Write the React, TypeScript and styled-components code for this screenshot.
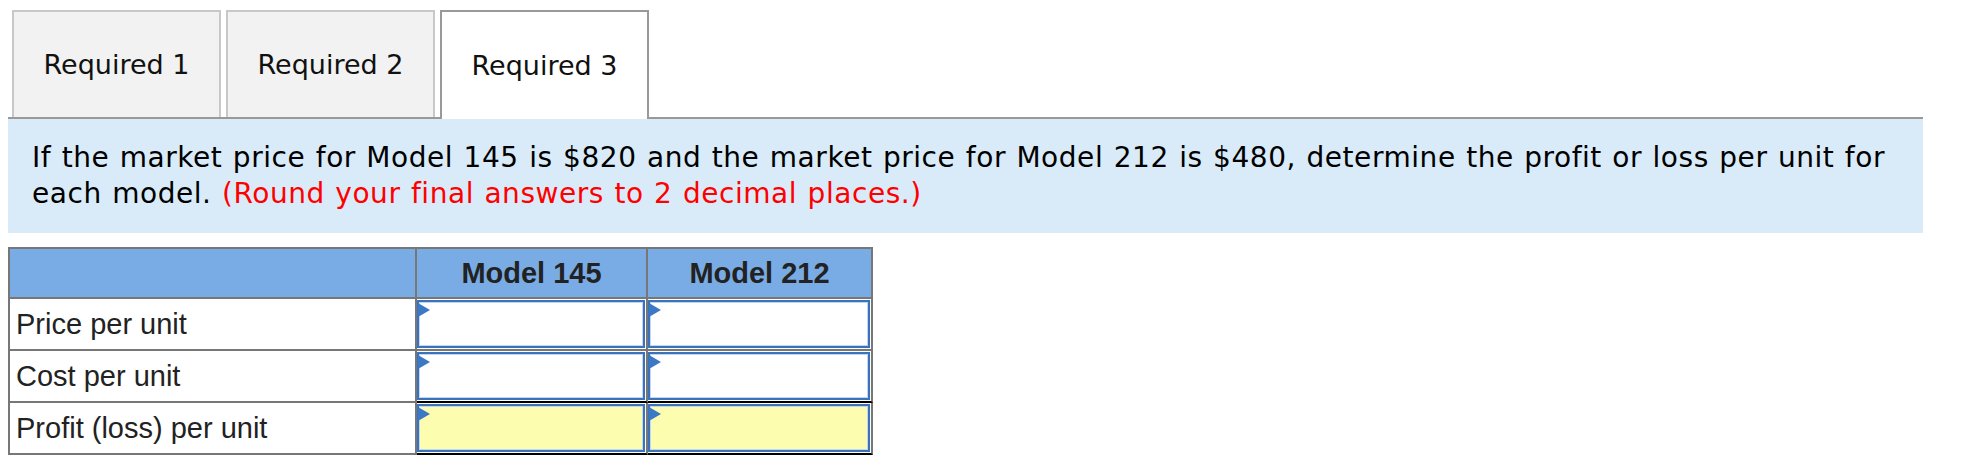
import styled, { createGlobalStyle, css } from 'styled-components';

const GlobalStyle = createGlobalStyle`
  body {
    margin: 8px;
    background: #fff;
  }
`;

const Wrapper = styled.div`
  width: 1915px;
`;

const TabStrip = styled.div`
  display: flex;
  gap: 5px;
  padding: 2px 0 0 4px;
  border-bottom: 2px solid #999;
`;

const Tab = styled.div<{ $active?: boolean }>`
  box-sizing: border-box;
  width: 209px;
  height: 107px;
  display: flex;
  align-items: center;
  justify-content: center;
  border: 2px solid #c8c8c8;
  border-bottom: none;
  background: #f2f2f2;
  font-family: 'DejaVu Sans', Verdana, sans-serif;
  font-size: 27px;
  color: #111;
  cursor: pointer;

  ${(p) =>
    p.$active &&
    css`
      height: 109px;
      margin-bottom: -2px;
      border-color: #999;
      background: #fff;
    `}
`;

const Prompt = styled.div`
  background: #d9ebf9;
  padding: 21px 24px 21px;
  font-family: 'DejaVu Sans', Verdana, sans-serif;
  font-size: 28px;
  line-height: 36px;
  letter-spacing: 0.55px;
  word-spacing: 1px;
  color: #000;
`;

const Line = styled.div`
  white-space: nowrap;
`;

const Hint = styled.span`
  color: #f00;
`;

const Grid = styled.table`
  margin-top: 14px;
  border-collapse: separate;
  border-spacing: 0;
  border-top: 2px solid #777;
  border-left: 2px solid #777;
  font-family: 'Liberation Sans', Arial, sans-serif;
  color: #222;
`;

const HeadCell = styled.th<{ $w: number }>`
  width: ${(p) => p.$w}px;
  height: 48px;
  padding: 0;
  background: #79ace4;
  border-right: 2px solid #777;
  border-bottom: 2px solid #777;
  font-size: 29px;
  font-weight: bold;
  text-align: center;
`;

const Label = styled.td`
  height: 50px;
  padding: 0 0 0 6px;
  border-right: 2px solid #777;
  border-bottom: 2px solid #777;
  font-size: 29px;
  vertical-align: middle;
`;

const EntryCell = styled.td<{ $rule?: boolean }>`
  padding: 1px 1px 1px 0;
  border-right: 2px solid #777;
  border-bottom: 2px solid ${(p) => (p.$rule ? '#000' : '#777')};
`;

const Entry = styled.div<{ $total?: boolean }>`
  position: relative;
  box-sizing: border-box;
  height: 48px;
  border: 2px solid #3a73bb;
  box-shadow: inset 0 0 0 1px #c3d6ef;
  background: ${(p) => (p.$total ? '#fcfdaf' : '#fff')};

  &::before {
    content: '';
    position: absolute;
    top: 1px;
    left: -1px;
    border-left: 12px solid #3b79c7;
    border-top: 7px solid transparent;
    border-bottom: 7px solid transparent;
  }
`;

const rows = [
  { label: 'Price per unit', total: false },
  { label: 'Cost per unit', total: false },
  { label: 'Profit (loss) per unit', total: true },
];

export default function App() {
  return (
    <>
      <GlobalStyle />
      <Wrapper>
        <TabStrip>
          <Tab>Required 1</Tab>
          <Tab>Required 2</Tab>
          <Tab $active>Required 3</Tab>
        </TabStrip>
        <Prompt>
          <Line>
            If the market price for Model 145 is $820 and the market price for Model 212 is $480, determine the
            profit or loss per unit for
          </Line>
          <Line>
            each model. <Hint>(Round your final answers to 2 decimal places.)</Hint>
          </Line>
        </Prompt>
        <Grid>
          <thead>
            <tr>
              <HeadCell $w={405} />
              <HeadCell $w={229}>Model 145</HeadCell>
              <HeadCell $w={223}>Model 212</HeadCell>
            </tr>
          </thead>
          <tbody>
            {rows.map((r, i) => (
              <tr key={r.label}>
                <Label>{r.label}</Label>
                {[0, 1].map((c) => (
                  <EntryCell key={c} $rule={i >= 1}>
                    <Entry $total={r.total} />
                  </EntryCell>
                ))}
              </tr>
            ))}
          </tbody>
        </Grid>
      </Wrapper>
    </>
  );
}
